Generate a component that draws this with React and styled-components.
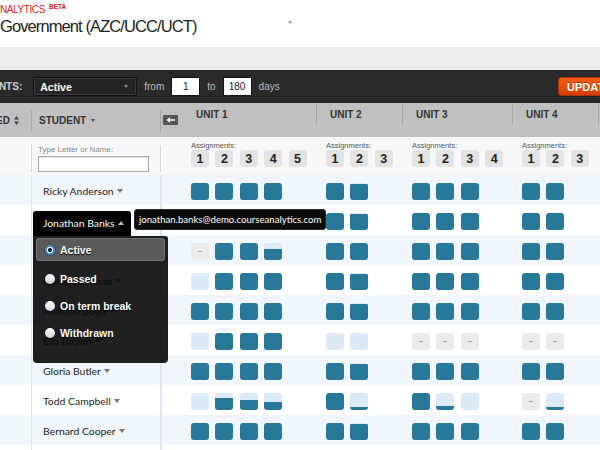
import React from 'react';
import styled, { createGlobalStyle, css } from 'styled-components';

const TEAL = '#287999';
const LIGHT = '#dce9f7';
const COLS = '31px 129px 21px 135px 86px 110px 86px 1fr';

const GlobalStyle = createGlobalStyle`
  html, body {
    margin: 0;
    padding: 0;
    background: #fff;
    overflow: hidden;
  }
  body {
    font-family: "Liberation Sans", Arial, Helvetica, sans-serif;
    color: #222;
  }
`;

const Page = styled.div`
  width: 660px;
`;

/* ---------- top header ---------- */

const TopBar = styled.header`
  height: 47px;
  box-sizing: border-box;
  padding-top: 3px;
`;

const Brand = styled.div`
  display: flex;
  align-items: flex-start;
  height: 13px;
  color: #d9201b;
  font-size: 10px;
  letter-spacing: -0.4px;
  line-height: 13px;
`;

const Beta = styled.span`
  margin: -3px 0 0 4px;
  font-size: 6.5px;
  font-weight: bold;
  letter-spacing: 0;
`;

const TitleRow = styled.div`
  display: flex;
  align-items: center;
  justify-content: space-between;
  width: 292px;
  height: 21px;
`;

const Title = styled.h1`
  margin: 0;
  font-size: 16.5px;
  font-weight: normal;
  letter-spacing: -0.9px;
  color: #222;
`;

const Caret = styled.span`
  display: inline-block;
  flex: none;
  width: 0;
  height: 0;
  border-left: ${p => p.$w || 3}px solid transparent;
  border-right: ${p => p.$w || 3}px solid transparent;
  border-top: ${p => p.$h || 4}px solid ${p => p.$color || '#999'};
  ${p => p.$up && css`
    border-top: 0;
    border-bottom: ${p.$h || 4}px solid ${p.$color || '#999'};
  `}
`;

const TitleCaret = styled(Caret)`
  align-self: flex-start;
  margin-top: 5px;
`;

const GreyBand = styled.div`
  height: 23px;
  background: #ececec;
`;

/* ---------- dark toolbar ---------- */

const Toolbar = styled.div`
  display: flex;
  align-items: center;
  gap: 7px;
  height: 33px;
  padding-right: 32px;
  background: #2a2a2a;
  overflow: hidden;
`;

const ToolLabel = styled.span`
  margin: 0 4px 0 -35px;
  color: #cfcfcf;
  font-size: 10px;
  font-weight: bold;
  white-space: nowrap;
`;

const Select = styled.div`
  display: flex;
  align-items: center;
  justify-content: space-between;
  box-sizing: border-box;
  width: 104px;
  height: 19px;
  padding: 0 8px 0 6px;
  background: #242424;
  border: 1px solid #111;
  box-shadow: inset 0 0 0 1px #3a3a3a;
  border-radius: 2px;
  color: #fff;
  font-size: 10.5px;
  font-weight: bold;
`;

const ToolText = styled.span`
  color: #bdbdbd;
  font-size: 10px;
`;

const NumInput = styled.div`
  display: flex;
  align-items: center;
  justify-content: center;
  box-sizing: border-box;
  width: 29px;
  height: 19px;
  background: #fff;
  border: 1px solid #111;
  color: #222;
  font-size: 10px;
`;

const UpdateButton = styled.button`
  margin-left: auto;
  height: 19px;
  width: 70px;
  padding: 0 8px;
  text-align: left;
  background: linear-gradient(#f15d16, #d43e00);
  border: 1px solid #a53000;
  border-radius: 3px;
  color: #fff;
  font-family: inherit;
  font-size: 11px;
  font-weight: bold;
  text-shadow: 0 -1px 0 rgba(0, 0, 0, 0.25);
`;

/* ---------- table ---------- */

const grid = css`
  display: grid;
  grid-template-columns: ${COLS};
`;

const sep = (top, bottom, color) => css`
  &::before {
    content: '';
    position: absolute;
    left: 0;
    top: ${top}px;
    bottom: ${bottom}px;
    width: 1px;
    background: ${color};
  }
`;

const HeaderRow = styled.div`
  ${grid}
  height: 34px;
  background: #c0c0c0;
  color: #333;
  font-size: 10px;
  font-weight: bold;
`;

const EdHead = styled.div`
  display: flex;
  align-items: center;
  gap: 4px;
  overflow: hidden;
  & > span {
    margin-left: -4px;
  }
`;

const StudentHead = styled.div`
  position: relative;
  display: flex;
  align-items: center;
  gap: 5px;
  padding-left: 8px;
  ${sep(7, 6, '#a6a6a6')}
`;

const CollapseHead = styled.div`
  position: relative;
  display: flex;
  align-items: center;
  padding-left: 3px;
  ${sep(7, 4, '#a6a6a6')}
`;

const UnitHead = styled.div`
  position: relative;
  padding: 6px 0 0 ${p => p.$pad}px;
  ${p => p.$sep && sep(0, 12, '#a6a6a6')}
`;

const FilterRow = styled.div`
  ${grid}
  height: 38px;
  background: #f7f7f7;
`;

const StudentFilter = styled.div`
  position: relative;
  padding: 8px 0 0 7px;
  ${sep(7, 3, '#d6d6d6')}
`;

const FilterLabel = styled.div`
  color: #8a8a8a;
  font-size: 8px;
  line-height: 10px;
`;

const NameInput = styled.div`
  box-sizing: border-box;
  width: 111px;
  height: 16px;
  margin-top: 1px;
  background: #fff;
  border: 1px solid #a9a9a9;
  box-shadow: inset 0 1px 1px rgba(0, 0, 0, 0.12);
`;

const GapFilter = styled.div`
  position: relative;
  ${sep(8, 3, '#d6d6d6')}
`;

const UnitFilter = styled.div`
  padding: 4px 0 0 10px;
`;

const AssignLabel = styled.div`
  color: #555;
  font-size: 7.5px;
  line-height: 9px;
`;

const BoxRow = styled.div`
  display: flex;
  gap: 6.4px;
`;

const NumBox = styled.div`
  display: flex;
  align-items: center;
  justify-content: center;
  width: 18px;
  height: 17px;
  background: #e3e3e3;
  border-radius: 3px;
  color: #222;
  font-size: 12.5px;
  font-weight: bold;
`;

const Row = styled.div`
  ${grid}
  height: 30px;
  background: ${p => (p.$odd ? '#f1f6fc' : '#fff')};
`;

const NameCell = styled.div`
  position: relative;
  display: flex;
  align-items: center;
  gap: 3px;
  padding: 2px 0 0 11px;
  border-left: 1px solid #d5e3f3;
  font-family: Lato, "Liberation Sans", sans-serif;
  font-size: 10.4px;
  color: #222;
  ${p => p.$open && css`z-index: 10;`}
`;

const GapCell = styled.div`
  border-left: 2px solid #d9e6f5;
`;

const UnitCells = styled.div`
  display: flex;
  align-items: center;
  gap: 6.4px;
  padding: 2px 0 0 10px;
`;

const Cell = styled.div`
  display: flex;
  align-items: flex-end;
  justify-content: center;
  width: 18px;
  height: 17px;
  border-radius: 3px;
  overflow: hidden;
  background: ${p => (p.$kind === 'full' ? TEAL : p.$kind === 'dash' ? '#ebebeb' : LIGHT)};
  ${p => p.$kind === 'dash' && css`
    align-items: center;
    &::after {
      content: '';
      width: 4px;
      height: 1px;
      background: #a8a8a8;
    }
  `}
`;

const Fill = styled.div`
  width: 100%;
  background: ${TEAL};
`;

/* ---------- student popover ---------- */

const Tab = styled.div`
  position: absolute;
  left: 1px;
  top: 6px;
  display: flex;
  align-items: center;
  gap: 3px;
  box-sizing: border-box;
  width: 98px;
  height: 25px;
  padding: 0 0 2px 10px;
  background: #000;
  border-radius: 3px 3px 0 0;
  color: #fff;
`;

const Panel = styled.div`
  position: absolute;
  left: 1px;
  top: 31px;
  box-sizing: border-box;
  width: 135px;
  height: 127px;
  padding: 2px 3px;
  background: rgba(8, 8, 8, 0.9);
  border-radius: 0 3px 4px 4px;
`;

const Option = styled.div`
  display: flex;
  align-items: center;
  gap: 5px;
  box-sizing: border-box;
  height: ${p => (p.$active ? 23 : 27)}px;
  margin-bottom: ${p => (p.$active ? 4 : 0)}px;
  padding-left: 9px;
  border-radius: 3px;
  color: #fff;
  font-family: "Liberation Sans", Arial, sans-serif;
  font-size: 10.5px;
  font-weight: bold;
  text-shadow: 0 1px 1px #000;
  ${p => p.$active && css`
    background: rgba(112, 112, 112, 0.75);
    border: 1px solid rgba(150, 150, 150, 0.4);
    padding-left: 8px;
  `}
`;

const Radio = styled.span`
  width: 10px;
  height: 10px;
  border-radius: 50%;
  flex: none;
  background: ${p => (p.$on
    ? 'radial-gradient(circle, #0e2744 0 1.8px, #eaf4ff 2.3px 2.9px, #4c95e2 3.4px)'
    : 'linear-gradient(#ffffff, #d2d2d2)')};
  box-shadow: 0 0 0 0.5px rgba(0, 0, 0, 0.5);
`;

const Tooltip = styled.div`
  position: absolute;
  left: 102px;
  top: 4px;
  display: flex;
  align-items: center;
  height: 19px;
  padding: 0 4px;
  background: #0c0c0c;
  border: 1px solid #2c2c2c;
  border-radius: 3px;
  color: #fff;
  font-family: Lato, "Liberation Sans", sans-serif;
  font-size: 9.6px;
  white-space: nowrap;
`;

const units = [
  { label: 'UNIT 1', count: 5 },
  { label: 'UNIT 2', count: 3 },
  { label: 'UNIT 3', count: 4 },
  { label: 'UNIT 4', count: 3 },
];

const F = 1;
const L = 'L';
const D = 'D';

const students = [
  { name: 'Ricky Anderson', u: [[F, F, F, F], [F, 0.9], [F, F, F], [F, F]] },
  { name: 'Jonathan Banks', open: true, u: [[L, F, F, F], [F, 0.92], [F, F, F], [F, F]] },
  { name: 'Chris Barnes', u: [[D, F, F, 0.6], [F, F], [F, F, F], [F, F]] },
  { name: 'Hollie Bowman', u: [[L, F, F, F], [F, 0.9], [F, F, F], [F, F]] },
  { name: 'Annette Boyd', u: [[F, F, F, F], [F, 0.93], [F, F, F], [F, F]] },
  { name: 'Ella Brown', u: [[L, F, F, F], [L, L], [D, D, D], [D, D]] },
  { name: 'Gloria Butler', u: [[F, F, F, F], [F, 0.9], [F, F, F], [F, F]] },
  { name: 'Todd Campbell', u: [[L, 0.68, 0.58, 0.44], [F, 0.12], [F, 0.22, L], [D, 0.16]] },
  { name: 'Bernard Cooper', u: [[F, F, F, F], [F, 0.92], [F, F, F], [F, F]] },
  { name: 'Shelby Davis', u: [[F, F, F, F], [F, F], [F, F, F], [F, F]] },
];

const statuses = ['Active', 'Passed', 'On term break', 'Withdrawn'];

const SortIcon = () => (
  <svg width="5" height="9" viewBox="0 0 5 9">
    <path d="M2.5 0 L5 3.5 H0 Z M2.5 9 L0 5.5 H5 Z" fill="#444" />
  </svg>
);

const CollapseIcon = () => (
  <svg width="15" height="10" viewBox="0 0 15 10">
    <rect width="15" height="10" rx="1" fill="#555" />
    <path d="M3.5 5 L7 2.2 V4.2 H12 V5.8 H7 V7.8 Z" fill="#fff" />
  </svg>
);

const ScoreCell = ({ v }) => {
  if (v === 'L') return <Cell $kind="light" />;
  if (v === 'D') return <Cell $kind="dash" />;
  if (v >= 1) return <Cell $kind="full" />;
  return (
    <Cell $kind="light">
      <Fill style={{ height: `${v * 100}%` }} />
    </Cell>
  );
};

const StudentPopover = ({ name }) => (
  <>
    <Tab>
      {name}
      <Caret $up $w={3} $h={4} $color="#bbb" />
    </Tab>
    <Tooltip>jonathan.banks@demo.courseanalytics.com</Tooltip>
    <Panel>
      {statuses.map((s, i) => (
        <Option key={s} $active={i === 0}>
          <Radio $on={i === 0} />
          {s}
        </Option>
      ))}
    </Panel>
  </>
);

export default function App() {
  return (
    <Page>
      <GlobalStyle />
      <TopBar>
        <Brand>
          NALYTICS<Beta>BETA</Beta>
        </Brand>
        <TitleRow>
          <Title>Government (AZC/UCC/UCT)</Title>
          <TitleCaret $w={2.5} $h={3} $color="#999" />
        </TitleRow>
      </TopBar>
      <GreyBand />

      <Toolbar>
        <ToolLabel>STUDENTS:</ToolLabel>
        <Select>
          Active
          <Caret $w={2} $h={3} $color="#888" />
        </Select>
        <ToolText>from</ToolText>
        <NumInput>1</NumInput>
        <ToolText>to</ToolText>
        <NumInput>180</NumInput>
        <ToolText>days</ToolText>
        <UpdateButton>UPDATE</UpdateButton>
      </Toolbar>

      <HeaderRow>
        <EdHead>
          <span>ED</span>
          <SortIcon />
        </EdHead>
        <StudentHead>
          STUDENT
          <Caret $w={2.5} $h={3} $color="#444" />
        </StudentHead>
        <CollapseHead>
          <CollapseIcon />
        </CollapseHead>
        {units.map((u, i) => (
          <UnitHead key={u.label} $pad={i === 0 ? 15 : 14} $sep={i > 0}>
            {u.label}
          </UnitHead>
        ))}
        <UnitHead $pad={14} $sep />
      </HeaderRow>

      <FilterRow>
        <div />
        <StudentFilter>
          <FilterLabel>Type Letter or Name:</FilterLabel>
          <NameInput />
        </StudentFilter>
        <GapFilter />
        {units.map(u => (
          <UnitFilter key={u.label}>
            <AssignLabel>Assignments:</AssignLabel>
            <BoxRow>
              {Array.from({ length: u.count }, (_, n) => (
                <NumBox key={n}>{n + 1}</NumBox>
              ))}
            </BoxRow>
          </UnitFilter>
        ))}
        <div />
      </FilterRow>

      {students.map((s, r) => (
        <Row key={s.name} $odd={r % 2 === 0}>
          <div />
          <NameCell $open={s.open}>
            {s.open ? (
              <StudentPopover name={s.name} />
            ) : (
              <>
                {s.name}
                <Caret $w={3} $h={4} $color="#777" />
              </>
            )}
          </NameCell>
          <GapCell />
          {s.u.map((cells, ui) => (
            <UnitCells key={ui}>
              {cells.map((v, ci) => (
                <ScoreCell key={ci} v={v} />
              ))}
            </UnitCells>
          ))}
          <div />
        </Row>
      ))}
    </Page>
  );
}
